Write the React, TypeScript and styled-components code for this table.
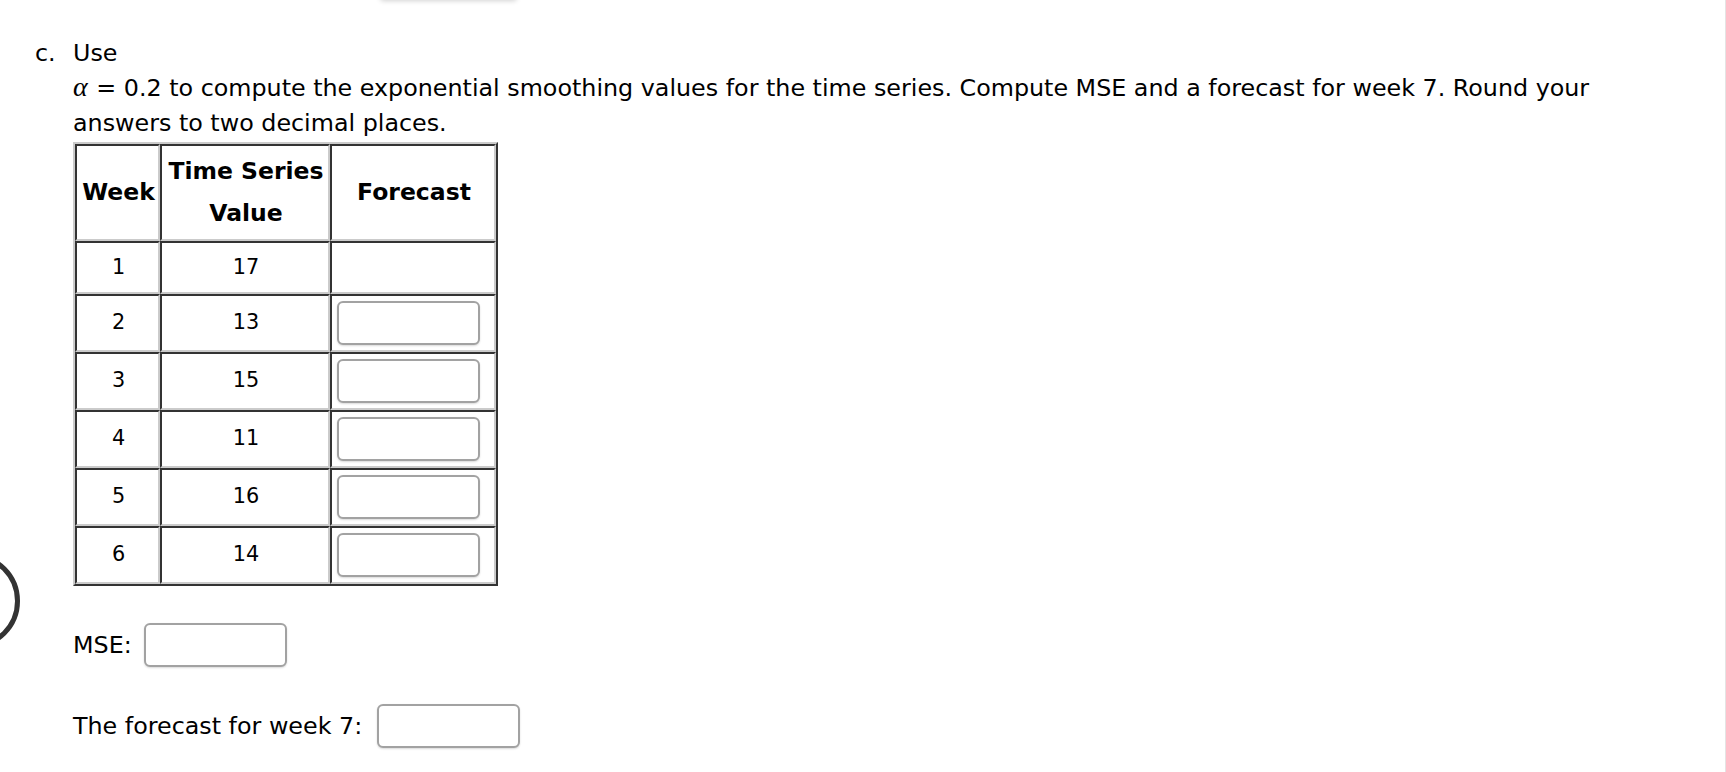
import styled, { createGlobalStyle } from "styled-components";

const Global = createGlobalStyle`
  body {
    margin: 0;
    background: #fff;
    color: #000;
    font-family: "DejaVu Sans", Verdana, sans-serif;
  }
`;

const Page = styled.div`
  box-sizing: border-box;
  min-height: 100vh;
  padding: 36px 60px 0 35px;
  border-right: 1px solid #e4e4e4;
`;

const TopTab = styled.div`
  position: fixed;
  top: -30px;
  left: 380px;
  width: 137px;
  height: 30px;
  background: #fff;
  border-radius: 0 0 4px 4px;
  box-shadow: 0 1px 5px rgba(0, 0, 0, 0.18);
`;

const SideButton = styled.div`
  position: fixed;
  left: -76px;
  top: 553px;
  width: 96px;
  height: 96px;
  box-sizing: border-box;
  border: 5px solid #333;
  border-radius: 50%;
`;

const Item = styled.div`
  display: flex;
`;

const Marker = styled.span`
  width: 38px;
  flex: none;
  font-size: 23.8px;
  line-height: 35px;
`;

const Body = styled.div`
  flex: 1;
`;

const Prompt = styled.p`
  margin: 0;
  font-size: 23.8px;
  line-height: 35px;
`;

const Alpha = styled.i`
  font-family: "Liberation Serif", "DejaVu Serif", serif;
  font-size: 28px;
  line-height: 0;
  padding-right: 1px;
`;

const Table = styled.table`
  margin-top: 1px;
  border-collapse: separate;
  border-spacing: 0;
  border: 2px solid;
  border-color: #cbcbcb #333 #333 #cbcbcb;
`;

const Cell = styled.td<{ $w?: number; $left?: boolean }>`
  box-sizing: border-box;
  width: ${(p) => (p.$w ? `${p.$w}px` : "auto")};
  border: 2px solid;
  border-color: #333 #cbcbcb #cbcbcb #333;
  padding: 5px 3px 5px 5px;
  text-align: ${(p) => (p.$left ? "left" : "center")};
  vertical-align: middle;
  font-size: 20.8px;
  line-height: 38.5px;
`;

const Head = styled(Cell).attrs({ as: "th" })`
  font-size: 23.5px;
  font-weight: bold;
  line-height: 41.5px;
`;

const Field = styled.input`
  display: block;
  box-sizing: border-box;
  width: 143px;
  height: 44px;
  margin: 0;
  border: 2px solid #a2a2a2;
  border-radius: 6px;
  background: #fff;
  box-shadow: 0 1px 2px rgba(0, 0, 0, 0.15);
`;

const AnswerRow = styled.div<{ $gap: number }>`
  display: flex;
  align-items: center;
  gap: ${(p) => p.$gap}px;
  margin-top: 37px;
  font-size: 23.8px;
`;

const series = [17, 13, 15, 11, 16, 14];

export default function App() {
  return (
    <>
      <Global />
      <TopTab />
      <SideButton />
      <Page>
        <Item>
          <Marker>c.</Marker>
          <Body>
            <Prompt>Use</Prompt>
            <Prompt>
              <Alpha>α</Alpha> = 0.2 to compute the exponential smoothing values for the time series. Compute MSE and a
              forecast for week 7. Round your answers to two decimal places.
            </Prompt>
            <Table>
              <thead>
                <tr>
                  <Head $w={85}>Week</Head>
                  <Head $w={170}>
                    Time Series
                    <br />
                    Value
                  </Head>
                  <Head $w={166}>Forecast</Head>
                </tr>
              </thead>
              <tbody>
                {series.map((v, i) => (
                  <tr key={i}>
                    <Cell>{i + 1}</Cell>
                    <Cell>{v}</Cell>
                    <Cell $left>{i > 0 && <Field type="text" />}</Cell>
                  </tr>
                ))}
              </tbody>
            </Table>
            <AnswerRow $gap={12}>
              <span>MSE:</span>
              <Field type="text" />
            </AnswerRow>
            <AnswerRow $gap={15}>
              <span>The forecast for week 7:</span>
              <Field type="text" />
            </AnswerRow>
          </Body>
        </Item>
      </Page>
    </>
  );
}
